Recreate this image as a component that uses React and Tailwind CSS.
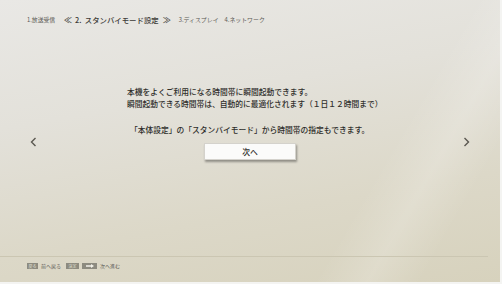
const jp = { fontFamily: '"Noto Sans CJK JP", "Noto Sans", sans-serif' };

function Chevron({ dir }) {
  return (
    <svg width="7" height="10" viewBox="0 0 7 10" className="text-[#5a5850]">
      <path
        d={dir === 'left' ? 'M5.5 1 L1.5 5 L5.5 9' : 'M1.5 1 L5.5 5 L1.5 9'}
        fill="none"
        stroke="currentColor"
        strokeWidth="1.4"
      />
    </svg>
  );
}

function Key({ children, className = '' }) {
  return (
    <span className={`flex h-[6px] items-center justify-center bg-[#8d8b80] text-[4px] text-[#e6e3d8] ${className}`}>
      {children}
    </span>
  );
}

export default function App() {
  return (
    <div className="h-[284px] w-[502px] bg-[#f4f4f2]" style={jp}>
      <div className="relative flex h-[282px] w-[500px] flex-col overflow-hidden bg-[linear-gradient(170deg,#e9e8e5_0%,#e3e1da_35%,#dcd8c8_70%,#d7d2bd_100%)]">
        <div className="pointer-events-none absolute inset-0 bg-[linear-gradient(120deg,transparent_72%,rgba(255,255,255,0.18)_80%,transparent_88%)]" />

        {/* step header */}
        <div className="relative flex h-[40px] items-center pl-[27px] text-[#5c5a55]">
          <span className="text-[5.8px]">1.放送受信</span>
          <span className="ml-[9px] flex items-center text-[7.4px] font-medium text-[#3c3a36]">
            <span className="text-[8px]">≪</span>
            <span className="ml-[3px]">2.&nbsp;&nbsp;スタンバイモード設定</span>
            <span className="ml-[4px] text-[8px]">≫</span>
          </span>
          <span className="ml-[8px] text-[5.9px]">3.ディスプレイ</span>
          <span className="ml-[6px] text-[5.9px]">4.ネットワーク</span>
        </div>

        {/* body */}
        <div className="relative flex flex-1 items-start">
          <div className="ml-[30px] mt-[97px]">
            <Chevron dir="left" />
          </div>
          <div className="mx-auto mt-[46px] w-[246px] text-[7.75px] font-medium leading-[12px] text-[#2f2e2b]">
            <p className="whitespace-nowrap">本機をよくご利用になる時間帯に瞬間起動できます。</p>
            <p className="whitespace-nowrap">瞬間起動できる時間帯は、自動的に最適化されます（１日１２時間まで）</p>
            <p className="mt-[14px] whitespace-nowrap pl-[3px]">「本体設定」の「スタンバイモード」から時間帯の指定もできます。</p>
            <div className="mt-[7px] flex justify-center">
              <button className="flex h-[17px] w-[92px] items-center justify-center border border-[#d4d2cc] bg-[#fbfbfa] text-[7.75px] font-medium text-[#2f2e2b] shadow-[1px_2px_2px_rgba(0,0,0,0.35)]">
                次へ
              </button>
            </div>
          </div>
          <div className="mr-[30px] mt-[97px]">
            <Chevron dir="right" />
          </div>
        </div>

        {/* footer */}
        <div className="relative mr-[12px] h-px bg-[#cbc6b2]" />
        <div className="relative flex h-[25px] items-start pl-[27px] pt-[6px] text-[5px] leading-[6px] text-[#5c5a55]">
          <Key className="w-[11px]">戻る</Key>
          <span className="ml-[3px]">前へ戻る</span>
          <Key className="ml-[5px] w-[13px]">決定</Key>
          <Key className="ml-[3px] w-[15px]">
            <svg width="8" height="4" viewBox="0 0 8 4">
              <path d="M0 1.3 H5 V0 L8 2 L5 4 V2.7 H0 Z" fill="#f4f2ea" />
            </svg>
          </Key>
          <span className="ml-[3px]">次へ進む</span>
        </div>
      </div>
    </div>
  );
}
